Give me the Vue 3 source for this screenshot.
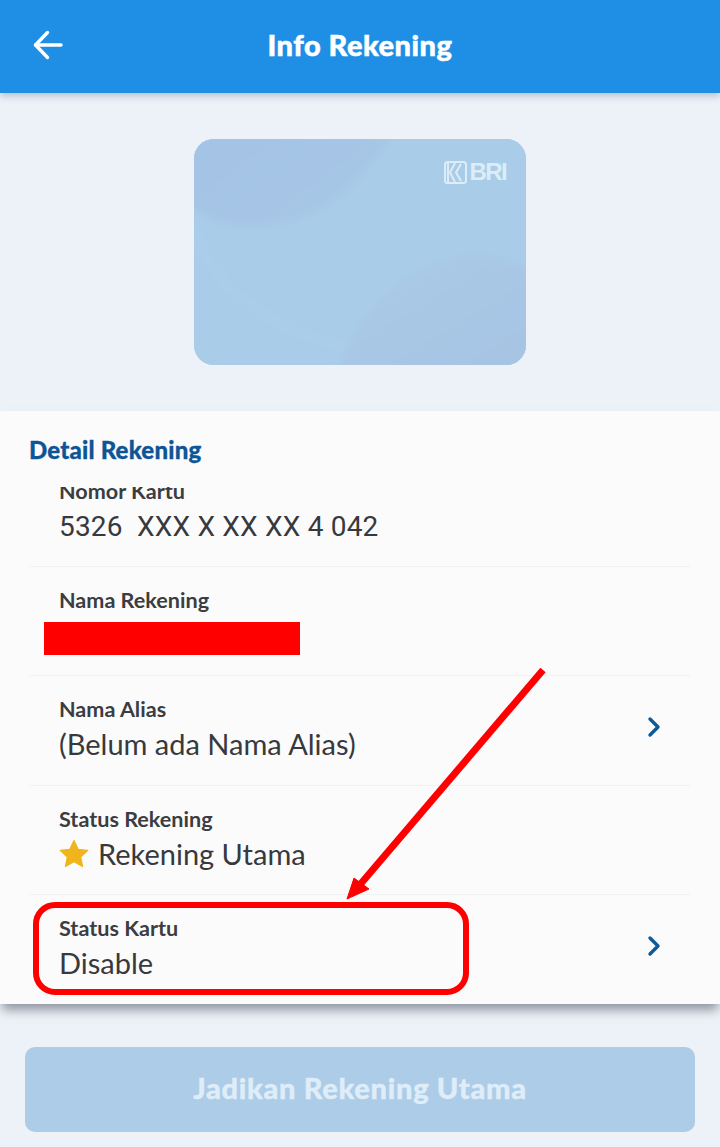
<script setup>
const chevron = 'M3 3 L11 11 L3 19'
</script>

<template>
  <div class="screen">
    <header class="topbar">
      <button class="back" aria-label="Kembali">
        <svg width="30" height="30" viewBox="0 0 30 30" fill="none" stroke="#fff" stroke-width="3.4" stroke-linecap="round" stroke-linejoin="round">
          <path d="M14.5 2.5 L2.5 15 L14.5 27.5" />
          <path d="M2.5 15 H28" />
        </svg>
      </button>
      <h1>Info Rekening</h1>
    </header>

    <section class="hero">
      <div class="card">
        <svg class="card-bg" viewBox="0 0 332 226" preserveAspectRatio="none">
          <defs>
            <linearGradient id="shadeA" x1="0" y1="0" x2="1" y2="0.6">
              <stop offset="0" stop-color="#a4c3e5" />
              <stop offset="1" stop-color="#a7c7e6" />
            </linearGradient>
            <linearGradient id="shadeB" x1="0" y1="0" x2="1" y2="1">
              <stop offset="0" stop-color="#aacbe8" />
              <stop offset="1" stop-color="#a6c3e2" />
            </linearGradient>
            <filter id="soft"><feGaussianBlur stdDeviation="4" /></filter>
          </defs>
          <rect width="332" height="226" fill="#a9cde9" />
          <path d="M-5 -5 H198 C170 40 130 88 60 88 C30 88 12 78 -5 70 Z" fill="url(#shadeA)" filter="url(#soft)" />
          <path d="M145 232 C160 170 220 118 280 116 C305 116 322 122 340 132 V232 Z" fill="url(#shadeB)" filter="url(#soft)" />
          <path d="M0 92 C18 140 60 185 150 208" fill="none" stroke="#b3d3ec" stroke-width="1.5" filter="url(#soft)" />
        </svg>
        <div class="brand">
          <svg width="23" height="23" viewBox="0 0 23 23" fill="none" stroke="#dcecf8" stroke-width="2">
            <rect x="1" y="1" width="21" height="21" rx="2.5" />
            <path d="M4 2 V21" />
            <path d="M11 2 L6 11.5 L11 21" />
            <path d="M17 3 L12 11.5 L17 20" />
          </svg>
          <span>BRI</span>
        </div>
      </div>
    </section>

    <section class="panel">
      <h2>Detail Rekening</h2>
      <div class="list">
        <div class="row first">
          <div class="info">
            <div class="label">Nomor Kartu</div>
            <div class="value number">5326&nbsp; XXX X XX XX 4 042</div>
          </div>
        </div>
        <div class="row">
          <div class="info">
            <div class="label">Nama Rekening</div>
            <div class="redacted"></div>
          </div>
        </div>
        <div class="row">
          <div class="info">
            <div class="label">Nama Alias</div>
            <div class="value">(Belum ada Nama Alias)</div>
          </div>
          <svg class="chev" width="14" height="22" viewBox="0 0 14 22" fill="none" stroke="#0f5a96" stroke-width="3.4" stroke-linecap="round" stroke-linejoin="round"><path :d="chevron" /></svg>
        </div>
        <div class="row">
          <div class="info">
            <div class="label">Status Rekening</div>
            <div class="value with-star">
              <svg width="30" height="29" viewBox="0 0 30 29"><path d="M15 1.5 L19.2 10.3 L28.8 11.4 L21.7 18 L23.6 27.5 L15 22.8 L6.4 27.5 L8.3 18 L1.2 11.4 L10.8 10.3 Z" fill="#f0b51c" stroke="#f0b51c" stroke-width="1.2" stroke-linejoin="round" /></svg>
              <span>Rekening Utama</span>
            </div>
          </div>
        </div>
        <div class="row last">
          <div class="info">
            <div class="label">Status Kartu</div>
            <div class="value">Disable</div>
          </div>
          <svg class="chev" width="14" height="22" viewBox="0 0 14 22" fill="none" stroke="#0f5a96" stroke-width="3.4" stroke-linecap="round" stroke-linejoin="round"><path :d="chevron" /></svg>
        </div>
      </div>
    </section>

    <footer class="footer">
      <button class="primary" disabled>Jadikan Rekening Utama</button>
    </footer>

    <div class="highlight"></div>
    <svg class="arrow" width="720" height="1147" viewBox="0 0 720 1147">
      <path d="M543 670 L358 887" stroke="#ff0000" stroke-width="7" fill="none" />
      <path d="M347 899 L354 878 L369 889 Z" fill="#ff0000" stroke="#ff0000" stroke-width="1" stroke-linejoin="round" />
    </svg>
  </div>
</template>

<style scoped>
.screen {
  position: relative;
  width: 720px;
  height: 1147px;
  overflow: hidden;
  background: #edf1f8;
  display: flex;
  flex-direction: column;
  font-family: Lato, "Open Sans", sans-serif;
  color: #37393d;
}
.topbar {
  position: relative;
  z-index: 2;
  flex: 0 0 93px;
  background: #1f8fe6;
  box-shadow: 0 3px 7px rgba(60, 80, 100, 0.3);
  display: flex;
  align-items: center;
  justify-content: center;
}
.back {
  position: absolute;
  left: 33px;
  top: 30px;
  padding: 0;
  border: 0;
  background: none;
  line-height: 0;
}
.topbar h1 {
  margin: 0;
  font-size: 29px;
  font-weight: 900;
  color: #fff;
  letter-spacing: 0.5px;
  line-height: 1;
  padding-bottom: 4px;
  -webkit-text-stroke: 0.5px #fff;
}
.hero {
  flex: 0 0 318px;
  display: flex;
  justify-content: center;
  padding-top: 46px;
  box-sizing: border-box;
}
.card {
  position: relative;
  width: 332px;
  height: 226px;
  border-radius: 20px;
  overflow: hidden;
  background: #a9cde9;
}
.card-bg {
  position: absolute;
  inset: 0;
  width: 100%;
  height: 100%;
}
.brand {
  position: absolute;
  top: 21px;
  right: 20px;
  display: flex;
  align-items: center;
  gap: 2px;
  height: 24px;
}
.brand span {
  font-family: "Liberation Sans", sans-serif;
  font-size: 24px;
  font-weight: 700;
  color: #dcecf8;
  letter-spacing: -1.6px;
  line-height: 1;
}
.panel {
  position: relative;
  z-index: 1;
  flex: 0 0 591px;
  background: #fbfbfc;
  box-shadow: 0 8px 10px -2px rgba(70, 75, 90, 0.55);
  display: flex;
  flex-direction: column;
}
.panel h2 {
  flex: 0 0 76px;
  box-sizing: border-box;
  margin: 0;
  padding: 24px 0 0 29px;
  font-size: 24px;
  line-height: 30px;
  font-weight: 900;
  letter-spacing: 0.2px;
  color: #0d5596;
  -webkit-text-stroke: 0.3px #0d5596;
}
.list {
  flex: 1;
  min-height: 0;
  overflow: hidden;
  margin: 0 30px 0 29px;
}
.row {
  box-sizing: border-box;
  height: 109.2px;
  padding: 19px 29px 0 30px;
  border-bottom: 1px solid #f1f2f4;
  display: flex;
  justify-content: space-between;
  align-items: flex-start;
}
.row.first {
  margin-top: -29px;
}
.row.last {
  border-bottom: 0;
}
.label {
  font-size: 21.6px;
  line-height: 28px;
  font-weight: 700;
  color: #3b3d41;
  white-space: nowrap;
}
.value {
  margin-top: 2px;
  font-size: 29px;
  line-height: 38px;
  font-weight: 400;
  color: #37393d;
  white-space: nowrap;
}
.value.number {
  font-family: Roboto, "Liberation Sans", sans-serif;
  font-size: 28px;
  letter-spacing: 0.2px;
  margin-top: 3px;
}
.with-star {
  display: flex;
  align-items: center;
  gap: 9px;
}
.redacted {
  margin: 8px 0 0 -15px;
  width: 256px;
  height: 33px;
  background: #ff0000;
}
.chev {
  margin-top: 21px;
}
.footer {
  flex: 1;
  padding: 43px 25px 0;
}
.primary {
  display: block;
  width: 100%;
  height: 85px;
  border: 0;
  padding: 0 0 4px;
  border-radius: 10px;
  background: #accce8;
  color: #dfedf8;
  font-family: Lato, "Open Sans", sans-serif;
  font-size: 29px;
  font-weight: 900;
  letter-spacing: 0.7px;
  -webkit-text-stroke: 0.4px #dfedf8;
}
.highlight {
  position: absolute;
  z-index: 3;
  left: 33px;
  top: 902px;
  width: 436px;
  height: 93px;
  box-sizing: border-box;
  border: 6px solid #ff0000;
  border-radius: 22px;
}
.arrow {
  position: absolute;
  z-index: 3;
  left: 0;
  top: 0;
  pointer-events: none;
}
</style>
